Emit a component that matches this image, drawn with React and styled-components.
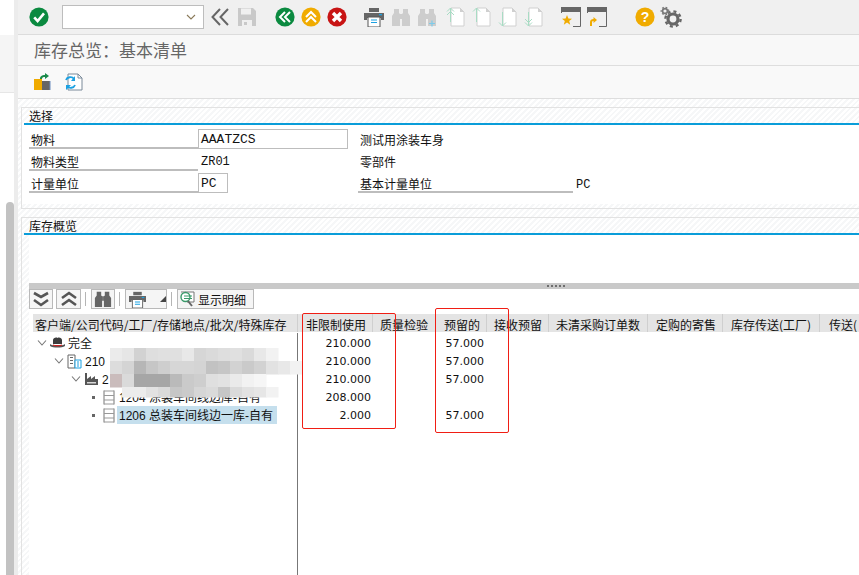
import React from 'react';
import styled, { createGlobalStyle } from 'styled-components';

const Global = createGlobalStyle`
  html, body { margin: 0; padding: 0; background: #fff; overflow: hidden; }
  body { font-family: "Liberation Sans", "Noto Sans CJK SC", sans-serif; }
`;
const CJK = `"Liberation Sans", "Noto Sans CJK SC", sans-serif`;
const CJKFIRST = `"Noto Sans CJK SC", "Liberation Sans", sans-serif`;
const Page = styled.div`position: relative; display: flex; width: 859px; height: 575px; overflow: hidden; background: #fff;`;
const Rail = styled.div`
  width: 14px; flex: none; display: flex; flex-direction: column; background: #fff;
  border-right: 4px solid #ececec;
`;
const RailTop = styled.div`height: 35px; flex: none;`;
const RailBand = styled.div`height: 57px; flex: none; background: #f5f5f5; border-bottom: 1px solid #e6e6e6;`;
const Thumb = styled.div`width: 8px; margin: 109px 0 0 6px; flex: 1; background: #c2c2c2; border-radius: 4px 4px 0 0;`;
const Main = styled.div`flex: 1; min-width: 0; display: flex; flex-direction: column;`;
const Toolbar = styled.div`height: 34px; flex: none; display: flex; align-items: center; padding-left: 8px; background: #f0f0f0; border-bottom: 1px solid #dcdcdc;`;
const Slot = styled.div`width: 26px; height: 24px; flex: none; display: flex; align-items: center; justify-content: center; margin-left: ${p => p.$gap || 0}px;`;
const Combo = styled.div`
  height: 22px; margin-left: 10px; flex: none; display: flex; align-items: center; justify-content: flex-end;
  padding-right: 7px; width: 133px; background: #fff; border: 1px solid #bdbdbd;
`;
const TitleBar = styled.div`height: 31px; flex: none; display: flex; align-items: center; padding: 0 0 2px 16px; box-sizing: border-box; background: #f8f8f8; border-bottom: 1px solid #dedede; font: 17px ${CJKFIRST}; color: #666;`;
const AppBar = styled.div`height: 32px; flex: none; display: flex; align-items: center; padding-left: 11px; gap: 6px; background: #f9f9f9; border-bottom: 1px solid #dedede;`;
const Content = styled.div`
  flex: 1; min-height: 0; display: flex; flex-direction: column; gap: 8px; padding: 8px 0 0 3px;
  background: repeating-linear-gradient(135deg, #fff 0 2px, #f6f7f8 2px 4px);
`;
const Group = styled.section`
  flex: none; border: 1px solid #e2e2e2; border-right: 0; padding: 1px 0 0 2px; box-sizing: border-box;
  height: ${p => p.$h}px; overflow: hidden;
`;
const GroupTitle = styled.h2`
  margin: 0; height: 14px; padding-left: 5px; font: 400 12px/16px ${CJK}; color: #111;
  border-bottom: 2px solid #0a9dd9;
`;
const Fields = styled.div`background: #fff; padding: 4px 0 0 7px; height: 79px; box-sizing: border-box; margin-left: -2px; display: flex; flex-direction: column; gap: 2px;`;
const Row = styled.div`display: flex; height: 20px; align-items: stretch;`;
const Label = styled.div`
  width: ${p => p.$w}px; flex: none; box-sizing: border-box; padding-left: 2px; margin-left: ${p => p.$ml || 0}px;
  font: 12px/24px ${CJK}; height: 20px; color: #111; border-bottom: 2px solid #bdbdbd;
`;
const Input = styled.div`
  width: ${p => p.$w}px; flex: none; box-sizing: border-box; border: 1px solid #bdbdbd; background: #fff; padding-left: 2px;
  font: 13px/20px "Liberation Mono", monospace; color: #111;
`;
const Mono = styled.div`width: ${p => p.$w}px; flex: none; padding-left: ${p => p.$pl || 2}px; box-sizing: border-box; font: 12px/${p => p.$lh || 22}px "Liberation Mono", monospace; color: #111;`;
const Desc = styled.div`margin-left: 12px; font: 12px/24px ${CJK}; color: #111;`;
const OverviewTop = styled.div`height: 48px; background: #fff; margin-left: 5px;`;
const Splitter = styled.div`margin-left: 5px; height: 6px; background: #c9c9c9; display: flex; justify-content: flex-end; padding-right: 294px; align-items: center; gap: 2px;`;
const Dot = styled.i`width: 2px; height: 2px; background: #6e6e6e; display: block;`;
const TableArea = styled.div`margin-left: 5px; background: #fff; height: 300px; position: relative;`;
const TableTools = styled.div`height: 20px; display: flex; align-items: center; gap: 3px;`;
const ToolBtn = styled.button`
  height: 20px; width: ${p => p.$w}px; flex: none; box-sizing: border-box; padding: 0;
  display: flex; align-items: center; justify-content: ${p => p.$text ? 'flex-start' : 'center'}; gap: 3px; padding-left: ${p => p.$text ? 2 : 0}px;
  background: #f5f5f5; border: 1px solid #b9b9b9; font: 12px ${CJK}; color: #111;
`;
const SplitBtn = styled(ToolBtn)`justify-content: space-between; align-items: center; padding: 0 0 0 3px;`;
const Sep = styled.i`display: block; width: 1px; height: 14px; background: #b5b5b5; margin: 0 2px 0 1px; flex: none;`;
const HeadRow = styled.div`
  display: flex; margin: 5px 0 0 4px; height: 18px; background: #e4e4e4; overflow: hidden;
`;
const Head = styled.div`
  flex: none; width: ${p => p.$w}px; box-sizing: border-box; padding-left: ${p => p.$pl ?? 7}px; white-space: nowrap;
  font: 12px/21px ${CJKFIRST}; color: #111; border-right: ${p => p.$noline ? 0 : '1px solid #cfcfcf'};
`;
const Body = styled.div`display: grid; grid-template-columns: 265px 75px 63px 50px; grid-auto-rows: 18px; margin: 2px 0 0 4px; position: relative;`;
const TreeCell = styled.div`display: flex; align-items: center; padding-left: ${p => p.$indent}px; font: 12px/18px ${CJK}; color: #111; white-space: nowrap; height: 18px;`;
const ExpandBox = styled.span`width: 12px; flex: none; display: flex; justify-content: center; align-items: center;`;
const NodeIcon = styled.span`width: 17px; flex: none; display: flex; justify-content: center; align-items: center; margin: 0 2px 0 1px;`;
const Leaf = styled.span`width: 3px; height: 3px; background: #666; display: block;`;
const NodeText = styled.span`
  background: ${p => p.$sel ? '#c5dfed' : 'transparent'}; line-height: 18px; padding: 1px 2px 0; margin-left: -2px; display: block; height: 18px;
  width: ${p => p.$sel ? '160px' : 'auto'}; box-sizing: border-box;
`;
const Value = styled.div`text-align: right; padding: 1px 2px 0 0; box-sizing: border-box; font: 11px/18px "DejaVu Sans", sans-serif; color: #111;`;
const VLine = styled.div`position: absolute; left: 297px; top: 333px; bottom: 0; width: 1px; background: #777;`;
const RedBox = styled.div`
  position: absolute; left: ${p => p.$x}px; top: ${p => p.$y}px; width: ${p => p.$w}px; height: ${p => p.$h}px;
  border: 1px solid #f01e14; border-radius: 2px; box-sizing: border-box; pointer-events: none;
`;
const Smudge = styled.svg`position: absolute; left: 106px; top: 346px; filter: blur(.7px);`;

const Check = () => <svg width="20" height="20" viewBox="0 0 20 20"><circle cx="10" cy="10" r="9.6" fill="#0b8a40"/><path d="M5.2 10.4l3.4 3.6 6.4-7.6" fill="none" stroke="#fff" strokeWidth="2.6"/></svg>;
const Chevrons = () => <svg width="20" height="20" viewBox="0 0 20 20"><path d="M10 2L2.5 10l7.5 8M18 2l-7.5 8 7.5 8" fill="none" stroke="#666" strokeWidth="2"/></svg>;
const Save = () => <svg width="20" height="20" viewBox="0 0 20 20"><path d="M1 1h15l3 3v15H1z" fill="#c9c9c9"/><path d="M4 1.500h10v6H4z" fill="#f0f0f0"/><path d="M5 13h10v6H5z" fill="#f0f0f0"/><path d="M7 15h3v3H7z" fill="#c9c9c9"/></svg>;
const Circ = ({ c, children }) => <svg width="20" height="20" viewBox="0 0 20 20"><circle cx="10" cy="10" r="9.6" fill={c}/>{children}</svg>;
const Back = () => <Circ c="#0b8a40"><path d="M10 5l-5 5 5 5M15 5l-5 5 5 5" fill="none" stroke="#fff" strokeWidth="2"/></Circ>;
const Up = () => <Circ c="#f0ab00"><path d="M5 10l5-5 5 5M5 15l5-5 5 5" fill="none" stroke="#fff" strokeWidth="2"/></Circ>;
const Cancel = () => <Circ c="#c81414"><path d="M6 6l8 8M14 6l-8 8" fill="none" stroke="#fff" strokeWidth="3.4"/></Circ>;
const Help = () => <Circ c="#f0ab00"><text x="10" y="15" textAnchor="middle" fontFamily="Liberation Sans" fontWeight="700" fontSize="14" fill="#fff">?</text></Circ>;
const Printer = ({ s = 20 }) => <svg width={s} height={s} viewBox="0 0 20 20"><path d="M5 1h10v4H5z" fill="#666"/><path d="M0 6h20v7h-3v-2H3v2H0z" fill="#666"/><path d="M4 10h12v10H4z" fill="#fff" stroke="#555"/><path d="M7 13h6M7 15.500h6" stroke="#1ba1e2" strokeWidth="1.2"/><path d="M15 7h3v1.300h-3z" fill="#1ba1e2"/></svg>;
const Binoc = ({ c = '#cdcdcd', plus, s = 20 }) => <svg width={s} height={s} viewBox="0 0 20 20"><path d="M3 2h5v4l1 1v12H1V9l2-3zM12 2h5v4l2 3v10h-8V7l1-1z" fill={c}/><path d="M9 7h2v5H9z" fill={c}/>{plus && <path d="M15 13.500v6M12 16.500h6" stroke="#7ecbea" strokeWidth="1.2"/>}</svg>;
const PageArrow = ({ down, dbl }) => <svg width="20" height="20" viewBox="0 0 20 20"><path d="M5 1h9l4 4v14H5z" fill="#fff" stroke="#d0d0d0"/><path d="M14 1v4h4z" fill="#d0d0d0"/><g fill="none" stroke="#a8dcc4"><path d={down ? 'M4.500 5v14M1 15.500L4.500 19 8 15.500' : 'M4.500 1v14M1 4.500L4.500 1 8 4.500'}/>{dbl && <path d={down ? 'M1 12L4.500 15.500 8 12' : 'M1 8L4.500 4.500 8 8'}/>}</g></svg>;
const WinStar = () => <svg width="20" height="20" viewBox="0 0 20 20"><path d="M0 0h20v5H0z" fill="#666"/><path d="M.5 5v1M19.500 5v14.500H12" fill="none" stroke="#666"/><path d="M6 8l1.400 3.600 3.600.2-2.800 2.300 1 3.600L6 15.600 2.800 17.700l1-3.600L1 11.800l3.600-.2z" fill="#f0ab00"/></svg>;
const WinArrow = () => <svg width="20" height="20" viewBox="0 0 20 20"><path d="M0 0h20v5H0z" fill="#666"/><path d="M.5 5v1M19.500 5v14.500H12" fill="none" stroke="#666"/><path d="M3 19v-4c0-2 1.500-3 3.500-3V10l3.500 3-3.500 3v-2c-1 0-1.500.500-1.500 1.500V19z" fill="#f0ab00"/></svg>;
const Gears = () => <svg width="22" height="22" viewBox="0 0 22 22"><circle cx="13" cy="13" r="5" fill="none" stroke="#666" strokeWidth="3.200"/><circle cx="13" cy="13" r="7.600" fill="none" stroke="#666" strokeWidth="2.400" strokeDasharray="3 3"/><circle cx="5" cy="5" r="2.400" fill="none" stroke="#777" strokeWidth="1.600"/><circle cx="5" cy="5" r="3.800" fill="none" stroke="#777" strokeWidth="1.200" strokeDasharray="1.800 1.800"/></svg>;
const Caret = () => <svg width="10" height="10" viewBox="0 0 10 10"><path d="M1 3l4 4 4-4" fill="none" stroke="#8a7a5a" strokeWidth="1.100"/></svg>;
const SwapDoc = () => <svg width="18" height="18" viewBox="0 0 18 18"><path d="M1 6h8v11H1z" fill="#f0ab00"/><path d="M9 8h8v9H9z" fill="#666"/><path d="M17 8v9" stroke="#6c8ebf"/><path d="M7 6c0-3 2-4 5-4V0l4 3-4 3V4c-2 0-3 .500-3 2z" fill="#1a8a4a"/></svg>;
const RefreshDoc = () => <svg width="18" height="18" viewBox="0 0 18 18"><path d="M3 1h10l4 4v12H3z" fill="#fff" stroke="#7a8a99"/><path d="M13 1v4h4" fill="none" stroke="#7a8a99"/><path d="M1 7c1-3 6-4 8-1M10 12c-1 3-6 4-8 1" fill="none" stroke="#1ba1e2" strokeWidth="1.800"/><path d="M10 3v5H6zM1 17v-5h5z" fill="#1ba1e2"/></svg>;
const DblDown = () => <svg width="18" height="16" viewBox="0 0 18 16"><path d="M2 2l7 4 7-4M2 9l7 5 7-5" fill="none" stroke="#555" strokeWidth="2.600"/></svg>;
const DblUp = () => <svg width="18" height="16" viewBox="0 0 18 16"><path d="M2 7l7-5 7 5M2 14l7-5 7 5" fill="none" stroke="#555" strokeWidth="2.600"/></svg>;
const Detail = () => <svg width="15" height="16" viewBox="0 0 15 16"><path d="M1 1h13v10H7" fill="#fff" stroke="#777"/><circle cx="5.500" cy="6" r="4.500" fill="#fff" stroke="#3a9a6a" strokeWidth="1.400"/><path d="M4 5h8M4 7.500h8" stroke="#3a9a6a"/><path d="M8 10l4 5" stroke="#666" strokeWidth="2"/></svg>;
const Triangle = () => <svg width="6" height="6" viewBox="0 0 6 6"><path d="M6 0v6H0z" fill="#444"/></svg>;
const TreeChev = () => <svg width="10" height="8" viewBox="0 0 10 8"><path d="M1 1.500L5 6l4-4.500" fill="none" stroke="#777" strokeWidth="1.100"/></svg>;
const Hat = () => <svg width="17" height="12" viewBox="0 0 17 12"><path d="M4 7V3c0-2 3-3 4.500-2C10 0 13 1 13 3v4z" fill="#3c3c3c"/><path d="M1 7c2 2 13 2 15 0v2c-3 2-12 2-15 0z" fill="#555"/><path d="M4 7.500c2 .8 7 .8 9 0v1.300c-2 .6-7 .6-9 0z" fill="#c22"/></svg>;
const Building = () => <svg width="15" height="15" viewBox="0 0 15 15"><path d="M1 1h7v13H1z" fill="#fff" stroke="#666"/><path d="M3 3.500h3M3 6.500h3M3 9.500h3" stroke="#666"/><path d="M8 6h6v8H8z" fill="#fff" stroke="#1ba1e2"/><path d="M10 8h2M10 10h2M10 12h2" stroke="#1ba1e2"/></svg>;
const Factory = () => <svg width="15" height="14" viewBox="0 0 15 14"><path d="M1 1h2v6l4-3v3l4-3v3h3v6H1z" fill="#555"/><path d="M3 10h9v1.500H3z" fill="#d9d9d9"/></svg>;
const Shelf = () => <svg width="12" height="15" viewBox="0 0 12 15"><path d="M1 .5v14M11 .5v14" stroke="#777"/><path d="M1 1h10M1 5.500h10M1 10h10M1 14h10" stroke="#999"/></svg>;

const mosaic = [
  { y: 2, h: 13, x: 110, c: ['#ebebeb','#e6e6e6','#d2d2d2','#dedede','#e0e0e0','#e0e0e0','#e8e8e8','#d6d6d6','#dadada','#dedede','#e0e0e0','#dadada','#e8e8e8','#f2f2f2'] },
  { y: 15, h: 13, x: 110, c: ['#dcdcdc','#d4d4d4','#b6b6b6','#c6c6c6','#cecece','#d6d6d6','#d6d6d6','#d4d4d4','#c2c2c2','#c6c6c6','#d2d2d2','#cacaca','#d2d2d2','#e2e2e2','#e8e8e8','#f2f2f2'] },
  { y: 28, h: 13, x: 110, c: ['#cabcbc','#dadada','#a6a6a6','#a6a6a6','#a6a6a6','#bababa','#cacaca','#cecece','#dfdfdf','#e2e2e2','#eaeaea','#f2f2f2','#f6f6f6'] },
  { y: 41, h: 10, x: 122, c: ['#ececec','#ececec','#e2e2e2','#dadada','#c6c6c6','#cacaca','#d6d6d6','#dadada','#c6c6c6','#dadada','#e2e2e2','#e6e6e6','#f2f2f2'] },
];
const tree = [
  { d: 6, chev: 1, icon: <Hat />, t: '完全', v1: '210.000', v3: '57.000' },
  { d: 23, chev: 1, icon: <Building />, t: '210', v1: '210.000', v3: '57.000' },
  { d: 40, chev: 1, icon: <Factory />, t: '2', v1: '210.000', v3: '57.000' },
  { d: 57, icon: <Shelf />, t: '1204 涂装车间线边库-自有', v1: '208.000' },
  { d: 57, icon: <Shelf />, t: '1206 总装车间线边一库-自有', sel: 1, v1: '2.000', v3: '57.000' },
];
const heads = [
  ['客户端/公司代码/工厂/存储地点/批次/特殊库存', 265, 2],
  ['非限制使用', 75, 8], ['质量检验', 63], ['预留的', 51, 8], ['接收预留', 62], ['未清采购订单数', 99], ['定购的寄售', 75, 8], ['库存传送(工厂)', 97, 8], ['传送(', 60, 9, 1],
];

export default function App() {
  return (
    <Page>
      <Global />
      <Rail><RailTop /><RailBand /><Thumb /></Rail>
      <Main>
        <Toolbar>
          <Slot><Check /></Slot>
          <Combo><Caret /></Combo>
          <Slot $gap={3}><Chevrons /></Slot>
          <Slot $gap={1}><Save /></Slot>
          <Slot $gap={12}><Back /></Slot>
          <Slot><Up /></Slot>
          <Slot><Cancel /></Slot>
          <Slot $gap={11}><Printer /></Slot>
          <Slot $gap={1}><Binoc /></Slot>
          <Slot><Binoc plus /></Slot>
          <Slot $gap={3}><PageArrow dbl /></Slot>
          <Slot><PageArrow /></Slot>
          <Slot><PageArrow down /></Slot>
          <Slot><PageArrow down dbl /></Slot>
          <Slot $gap={11}><WinStar /></Slot>
          <Slot><WinArrow /></Slot>
          <Slot $gap={22}><Help /></Slot>
          <Slot><Gears /></Slot>
        </Toolbar>
        <TitleBar>{'库存总览\uFF1A基本清单'}</TitleBar>
        <AppBar>
          <Slot><SwapDoc /></Slot>
          <Slot><RefreshDoc /></Slot>
        </AppBar>
        <Content>
          <Group $h={102}>
            <GroupTitle>选择</GroupTitle>
            <Fields>
              <Row>
                <Label $w={169}>物料</Label>
                <Input $w={150}>AAATZCS</Input>
                <Desc>测试用涂装车身</Desc>
              </Row>
              <Row>
                <Label $w={169}>物料类型</Label>
                <Mono $w={150} $pl={3}>ZR01</Mono>
                <Desc>零部件</Desc>
              </Row>
              <Row>
                <Label $w={169}>计量单位</Label>
                <Input $w={30}>PC</Input>
                <Label $w={215} $ml={130}>基本计量单位</Label>
                <Mono $w={30} $pl={3} $lh={24}>PC</Mono>
              </Row>
            </Fields>
          </Group>
          <Group $h={400}>
            <GroupTitle>库存概览</GroupTitle>
            <OverviewTop />
            <Splitter><Dot /><Dot /><Dot /><Dot /><Dot /></Splitter>
            <TableArea>
              <TableTools>
                <ToolBtn $w={24}><DblDown /></ToolBtn>
                <ToolBtn $w={25}><DblUp /></ToolBtn>
                <Sep />
                <ToolBtn $w={24}><Binoc c="#666" s={18} /></ToolBtn>
                <Sep />
                <SplitBtn $w={42}><Printer s={17} /><Triangle /></SplitBtn>
                <Sep />
                <ToolBtn $w={77} $text><Detail />显示明细</ToolBtn>
              </TableTools>
              <HeadRow>
                {heads.map(([t, w, pl, nl]) => <Head key={t} $w={w} $pl={pl} $noline={nl}>{t}</Head>)}
              </HeadRow>
              <Body>
                {tree.map(r => (
                  <React.Fragment key={r.t}>
                    <TreeCell $indent={r.d - 3}>
                      <ExpandBox>{r.chev ? <TreeChev /> : <Leaf />}</ExpandBox>
                      <NodeIcon>{r.icon}</NodeIcon>
                      <NodeText $sel={r.sel}>{r.t}</NodeText>
                    </TreeCell>
                    <Value>{r.v1}</Value>
                    <Value />
                    <Value>{r.v3}</Value>
                  </React.Fragment>
                ))}
              </Body>
            </TableArea>
          </Group>
        </Content>
      </Main>
      <VLine />
      <Smudge width="210" height="54" viewBox="106 346 210 54">
        {mosaic.flatMap((r, ri) => r.c.map((c, i) => <rect key={ri + '-' + i} x={r.x + i * 12} y={346 + r.y} width="12.500" height={r.h + .5} fill={c} />))}
      </Smudge>
      <RedBox $x={302} $y={313} $w={94} $h={116} />
      <RedBox $x={435} $y={308} $w={74} $h={125} />
    </Page>
  );
}
